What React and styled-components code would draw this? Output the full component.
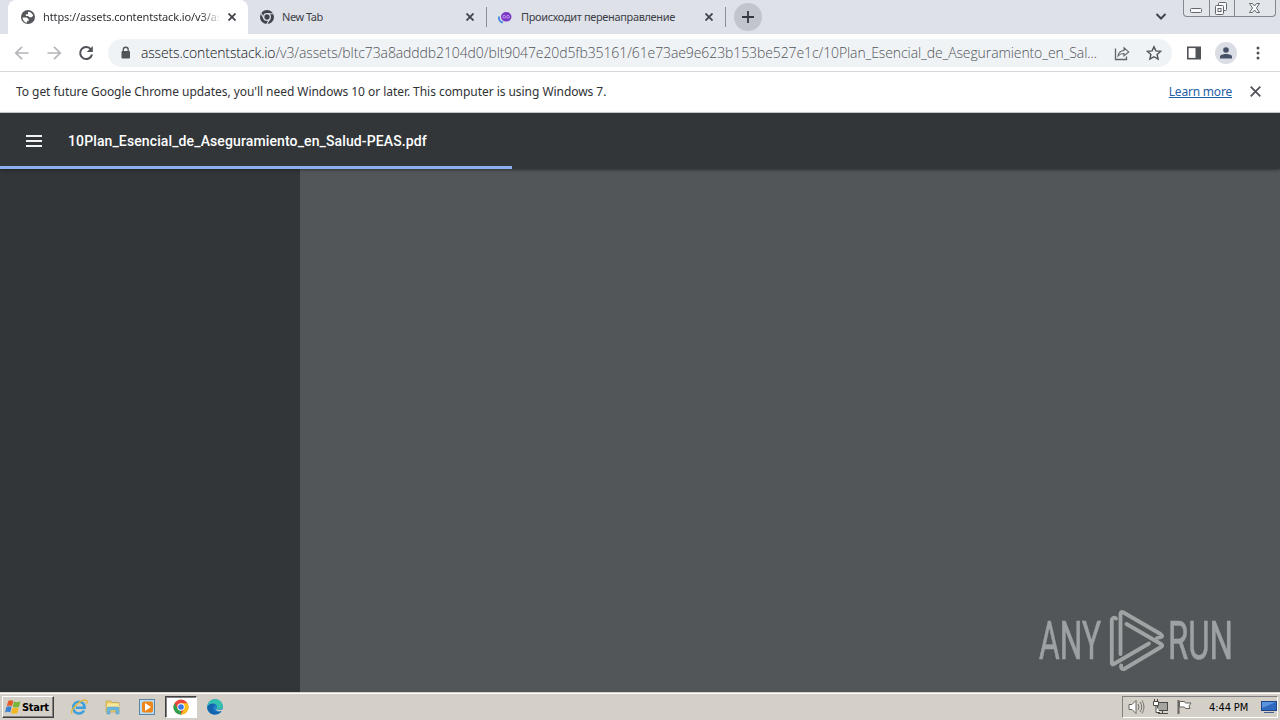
import React from "react";
import styled, { createGlobalStyle, css } from "styled-components";

const GlobalStyle = createGlobalStyle`
  * {
    box-sizing: border-box;
  }
  body {
    margin: 0;
    overflow: hidden;
    font-family: "Noto Sans", "Liberation Sans", sans-serif;
  }
  svg {
    display: block;
    flex: none;
  }
`;

const Desktop = styled.div`
  display: flex;
  flex-direction: column;
  width: 1280px;
  height: 720px;
`;

/* ---------- tab strip ---------- */

const TabStrip = styled.div`
  display: flex;
  height: 34px;
  padding-left: 8px;
  background: #dee1e8;
`;

const Tab = styled.div`
  display: flex;
  align-items: center;
  width: ${(p) => p.$width || 239}px;
  height: 34px;
  padding: 0 12px 0 ${(p) => (p.$active ? 12 : 11)}px;
  color: ${(p) => (p.$active ? "#303236" : "#3d4047")};
  ${(p) =>
    p.$active &&
    css`
      background: #fff;
      border-radius: 8px 8px 0 0;
    `}
`;

const TabTitle = styled.span`
  width: 176px;
  margin-left: ${(p) => p.$gap || 7}px;
  font-size: 11px;
  line-height: 16px;
  letter-spacing: ${(p) => p.$spacing || 0}px;
  white-space: nowrap;
  ${(p) =>
    p.$fade &&
    css`
      mask-image: linear-gradient(to right, #000 158px, transparent 178px);
    `}
`;

const TabClose = styled.span`
  margin-left: auto;
`;

const TabDivider = styled.span`
  width: 1px;
  height: 20px;
  margin: 7px -1px 0 0;
  background: #8b8e95;
`;

const NewTabButton = styled.div`
  display: grid;
  place-items: center;
  width: 28px;
  height: 28px;
  margin: 3px 0 0 9px;
  border-radius: 50%;
  background: #c2c5cb;
`;

const TabSearch = styled.span`
  margin: 12px 16px 0 auto;
`;

const WindowButtons = styled.div`
  display: flex;
  width: 93px;
  height: 17px;
  margin-right: 4px;
  border: 1px solid #85888e;
  border-top: 0;
  border-radius: 0 0 4px 4px;
  background: #e2e5ea;
`;

const WindowButton = styled.span`
  display: grid;
  place-items: center;
  width: ${(p) => p.$width}px;
  & + & {
    border-left: 1px solid #85888e;
  }
`;

/* ---------- toolbar ---------- */

const Toolbar = styled.div`
  display: flex;
  align-items: center;
  height: 38px;
  padding: 0 14px;
  border-bottom: 1px solid #d5d7da;
  background: #fff;
`;

const NavButton = styled.span`
  display: grid;
  place-items: center;
  width: 16px;
  height: 16px;
  margin-right: 16px;
`;

const Omnibox = styled.div`
  display: flex;
  align-items: center;
  width: 1064px;
  height: 28px;
  margin: 0 15px 0 -2px;
  padding: 0 10px 0 12px;
  border-radius: 14px;
  background: #f0f3f5;
`;

const Url = styled.span`
  width: 973px;
  margin-left: 9px;
  font-family: "Open Sans", "Noto Sans", sans-serif;
  font-size: 14px;
  font-weight: 300;
  line-height: 20px;
  letter-spacing: -0.1px;
  white-space: nowrap;
  color: #50545a;
`;

const Host = styled.span`
  color: #111317;
  letter-spacing: -0.16px;
`;

const Avatar = styled.div`
  display: grid;
  place-items: center;
  width: 22px;
  height: 22px;
  margin: 0 14px;
  border-radius: 50%;
  background: #dadde3;
`;

/* ---------- info bar ---------- */

const InfoBar = styled.div`
  display: flex;
  align-items: center;
  height: 41px;
  padding: 0 19px 2px 16px;
  border-bottom: 1px solid #cfd1d2;
  background: #fff;
  font-size: 12px;
  color: #303236;
`;

const InfoText = styled.span`
  letter-spacing: -0.05px;
`;

const InfoLink = styled.a`
  margin: 0 18px 0 auto;
  letter-spacing: -0.2px;
  color: #2460a8;
  text-decoration: underline;
`;

/* ---------- pdf viewer ---------- */

const PdfToolbar = styled.div`
  display: flex;
  align-items: center;
  position: relative;
  z-index: 1;
  height: 56px;
  padding-left: 26px;
  background: #323639;
  box-shadow: 0 1px 3px rgba(0, 0, 0, 0.4);
`;

const PdfTitle = styled.span`
  margin-left: 26px;
  font-family: Roboto, sans-serif;
  font-size: 14px;
  font-weight: 500;
  letter-spacing: 0.12px;
  color: #fff;
`;

const Progress = styled.div`
  position: absolute;
  left: 0;
  bottom: 0;
  width: 40%;
  height: 3px;
  background: #8ab0f0;
`;

const Viewer = styled.div`
  display: flex;
  flex: 1;
  min-height: 0;
`;

const Sidebar = styled.div`
  width: 300px;
  background: #323639;
`;

const Page = styled.div`
  display: flex;
  flex: 1;
  align-items: flex-end;
  justify-content: flex-end;
  padding: 0 44px 20px 0;
  background: #525659;
`;

/* ---------- taskbar ---------- */

const Taskbar = styled.div`
  display: flex;
  align-items: center;
  height: 28px;
  padding: 1px 2px 0;
  border-top: 1px solid #d4d0c8;
  box-shadow: inset 0 1px #fff;
  background: #d4d0c8;
  font-family: "DejaVu Sans Condensed", "DejaVu Sans", sans-serif;
  font-size: 11px;
`;

const StartButton = styled.div`
  display: flex;
  align-items: center;
  gap: 1px;
  width: 52px;
  height: 22px;
  margin-right: 9px;
  padding-left: 2px;
  border: 1px solid;
  border-color: #fff #404040 #404040 #fff;
  box-shadow: inset -1px -1px #808080;
  font-weight: bold;
  letter-spacing: -0.3px;
  color: #000;
`;

const TaskItem = styled.div`
  display: grid;
  place-items: center;
  width: 32px;
  height: 22px;
  margin-right: 2px;
  border: 1px solid transparent;
  ${(p) =>
    p.$pressed &&
    css`
      border-color: #404040 #fff #fff #404040;
      box-shadow: inset 1px 1px #808080;
      background: #fff;
    `}
`;

const Tray = styled.div`
  display: flex;
  align-items: center;
  gap: 7px;
  width: 156px;
  height: 22px;
  margin-left: auto;
  padding-left: 5px;
  border: 1px solid;
  border-color: #808080 #fff #fff #808080;
`;

const Clock = styled.span`
  width: 41px;
  margin: 0 5px 0 9px;
  letter-spacing: -0.1px;
  white-space: nowrap;
  color: #000;
`;

/* ---------- icons ---------- */

function CloseIcon({ size = 8, color = "#40434a", width = 1.8 }) {
  return (
    <svg width={size} height={size} viewBox="0 0 8 8">
      <path d="M.5 .5l7 7M7.500 .5l-7 7" stroke={color} strokeWidth={width} />
    </svg>
  );
}

function GlobeIcon() {
  return (
    <svg width="16" height="16" viewBox="0 0 16 16">
      <circle cx="8" cy="8" r="7" fill="#54575b" />
      <path d="M2.600 8.500h4.200l2 2v1.200H7.200v2C4.500 13.500 2.600 11 2.600 8.500zM8 2.800c2.500 0 4.600 1.700 5.200 4l-1.600 1.500H9.500L8 7H5.800V5.200H8z" fill="#fff" />
    </svg>
  );
}

function ChromeMonoIcon() {
  return (
    <svg width="16" height="16" viewBox="0 0 16 16">
      <circle cx="8" cy="8" r="7" fill="#40434a" />
      <circle cx="8" cy="8" r="3.300" fill="#40434a" stroke="#dee1e8" strokeWidth="1.300" />
      <path d="M8 4.700h6.500M5.100 9.700L2 4.200M10.900 9.700l-3.200 5.600" stroke="#dee1e8" strokeWidth="1.100" />
    </svg>
  );
}

function RedirectIcon() {
  return (
    <svg width="16" height="16" viewBox="0 0 16 16">
      <path d="M2 7.500c-.5 3 1 5.500 4 6" stroke="#518be8" strokeWidth="2" fill="none" />
      <ellipse cx="9.200" cy="7.800" rx="5.300" ry="4.800" fill="#7a38c8" />
      <circle cx="7.200" cy="7.800" r="1.400" fill="none" stroke="#c9a0f0" strokeWidth=".9" />
      <circle cx="11" cy="7.800" r="1.400" fill="none" stroke="#c9a0f0" strokeWidth=".9" />
    </svg>
  );
}

function ArrowIcon({ flip }) {
  return (
    <svg width="16" height="16" viewBox="0 0 16 16">
      <path
        d="M14.500 8H2M8 1.800L1.800 8 8 14.200"
        transform={flip ? "matrix(-1 0 0 1 16 0)" : undefined}
        fill="none"
        stroke="#b3b5b8"
        strokeWidth="1.700"
      />
    </svg>
  );
}

function ReloadIcon() {
  return (
    <svg width="16" height="16" viewBox="0 0 16 16">
      <path d="M13 4.500A6 6 0 1 0 14 9.500" fill="none" stroke="#505357" strokeWidth="2" />
      <path d="M14.800 1v6H8.800z" fill="#505357" />
    </svg>
  );
}

function LockIcon() {
  return (
    <svg width="12" height="14" viewBox="0 0 12 14">
      <rect x="1.500" y="5" width="8.500" height="7.500" rx="1" fill="#505357" />
      <path d="M3.300 5.500V3.700a2.450 2.450 0 0 1 4.900 0v1.800" fill="none" stroke="#505357" strokeWidth="1.300" />
    </svg>
  );
}

function ShareIcon() {
  return (
    <svg width="16" height="16" viewBox="0 0 16 16">
      <path d="M1.500 3.500v11h11v-3" fill="none" stroke="#606367" strokeWidth="1.300" />
      <path d="M4 11c.5-3.500 2.500-5.300 6-5.500V2.800l4.700 4.100-4.700 4V8.500C7.500 8.400 5.600 9.200 4 11z" fill="none" stroke="#606367" strokeWidth="1.100" />
    </svg>
  );
}

function StarIcon() {
  return (
    <svg width="16" height="16" viewBox="0 0 16 16">
      <path d="M8 1.700l1.900 4.200 4.700.5-3.500 3.100 1 4.600L8 11.700l-4.100 2.400 1-4.600-3.500-3.100 4.700-.5z" fill="none" stroke="#505357" strokeWidth="1.400" />
    </svg>
  );
}

function SidePanelIcon() {
  return (
    <svg width="14" height="14" viewBox="0 0 14 14">
      <rect x=".8" y="1.300" width="12.400" height="11.400" fill="none" stroke="#505357" strokeWidth="1.600" />
      <rect x="8.500" y="1" width="5.500" height="12" fill="#505357" />
    </svg>
  );
}

function WindowGlyph({ kind }) {
  const line = { fill: "#f7f8fa", stroke: "#63666d", strokeWidth: 1 };
  if (kind === "min") {
    return (
      <svg width="13" height="17" viewBox="0 0 13 17">
        <rect x=".5" y="8.500" width="11" height="4" rx="1" {...line} />
      </svg>
    );
  }
  if (kind === "restore") {
    return (
      <svg width="14" height="17" viewBox="0 0 14 17">
        <rect x="3.500" y="2.500" width="8" height="8" rx="1" {...line} />
        <rect x=".5" y="5.500" width="8" height="9" rx="1" {...line} />
        <rect x="3" y="8.500" width="3" height="3" {...line} />
      </svg>
    );
  }
  return (
    <svg width="13" height="17" viewBox="0 0 13 17">
      <path d="M.5 3.500h3l2 2.500 2-2.500h3L7.500 8l3 4.500h-3l-2-2.500-2 2.500h-3L3.500 8z" {...line} />
    </svg>
  );
}

function AnyRunLogo() {
  return (
    <svg width="198" height="64" viewBox="0 0 198 64">
      <g
        fill="#b4b7b9"
        stroke="#b4b7b9"
        strokeWidth=".7"
        opacity=".78"
        fontFamily="Roboto, sans-serif"
        fontSize="53"
      >
        <text x="1" y="51" textLength="62" lengthAdjust="spacingAndGlyphs">ANY</text>
        <text x="130" y="51" textLength="65" lengthAdjust="spacingAndGlyphs">RUN</text>
      </g>
      <g fill="none" stroke="#a9acad" strokeWidth="3.800" strokeLinecap="round" strokeLinejoin="round" opacity=".9">
        <path d="M78 10.500c-2-1.500-4.200-.5-4.200 2V55q0 2 2 1L111 35.500" />
        <path d="M82.500 46V6q0-3 3-1.500l37 21.500q3.500 2.500-.5 3.500l-3 .5" />
        <path d="M88.500 16L123 36q2.500 1.500 0 3L87 60.500c-2.500 1.500-4.500-.5-3.800-3" />
      </g>
    </svg>
  );
}

function WindowsFlag() {
  return (
    <svg width="16" height="16" viewBox="0 0 16 16">
      <path d="M3.200 2c2-1.200 3.500-1 5.200 0L7 7.300c-1.800-1-3.300-1-5.200 0z" fill="#e55b28" />
      <path d="M9 2.500c2 1 4 .9 6.500-.2L14 7.800c-1.900 1-4 1-6.200 0z" fill="#78b536" />
      <path d="M1.400 8c2-1 3.500-1 5.200 0l-1.400 5.400c-1.700-1-3.300-1-5.200 0z" fill="#3c83cf" />
      <path d="M7.500 8.500c2 1 4 1 6.200 0L12.300 14c-2 1-4.200 1-6.200 0z" fill="#f4b51e" />
    </svg>
  );
}

function ExplorerIcon() {
  return (
    <svg width="18" height="18" viewBox="0 0 18 18">
      <path d="M14 12.500c-1.200 2.200-2.900 3-5 3-3.500 0-5.800-2.600-5.800-6S5.700 3.700 9 3.700s5.600 2.300 5.600 6H5.800" fill="none" stroke="#3da0dc" strokeWidth="2.600" />
      <path d="M2 15.500C-.5 12 12-.2 16.500 2.500c1 .6.700 2-.2 3.300" fill="none" stroke="#e5b83a" strokeWidth="1.400" />
    </svg>
  );
}

function FolderIcon() {
  return (
    <svg width="18" height="18" viewBox="0 0 18 18">
      <path d="M2 3h5l1 1.500h7V14H2z" fill="#edcc62" stroke="#b9a055" strokeWidth=".7" />
      <path d="M3.500 5.500h11l1 7h-13z" fill="#f9e89b" />
      <path d="M3 16v-5.500q0-1.500 1.500-1.500h9q1.500 0 1.500 1.500V16h-3v-4H6v4z" fill="#6fb6dc" stroke="#4c94bb" strokeWidth=".5" />
    </svg>
  );
}

function MediaIcon() {
  return (
    <svg width="18" height="18" viewBox="0 0 18 18">
      <rect x="1.500" y="1.500" width="15" height="15" fill="#b9dcf2" stroke="#5786aa" />
      <rect x="4" y="3.500" width="11" height="11" rx="2" fill="#ef8718" />
      <path d="M7 5l6 4-6 4z" fill="#fff" />
    </svg>
  );
}

function ChromeIcon() {
  return (
    <svg width="16" height="16" viewBox="0 0 16 16">
      <circle cx="8" cy="8" r="7.500" fill="#e9483a" />
      <path d="M1.500 4.250L4.700 9.900 8 11.500v4A7.500 7.500 0 0 1 1.500 4.250z" fill="#2ba24c" />
      <path d="M14.500 4.250A7.500 7.500 0 0 1 8 15.500l3.300-5.600L8 4.250z" fill="#fbc116" />
      <circle cx="8" cy="8" r="3.700" fill="#fff" />
      <circle cx="8" cy="8" r="2.800" fill="#3b78e7" />
    </svg>
  );
}

function EdgeIcon() {
  return (
    <svg width="18" height="18" viewBox="0 0 18 18">
      <circle cx="9" cy="9" r="7.800" fill="#187bc6" />
      <path d="M1.200 8.500C2 3.800 5 1.200 9 1.200c5 0 8 3.500 7.800 7 0 2.700-3 4-5.500 3-1.300-.5-.4-1-.4-2.500C10.900 5 5 4 1.200 8.500z" fill="#35bfae" />
      <path d="M1.200 9c2.300-4 6-4 8-2-2.500.5-3 3.500-1.500 5.500 1.500 2 4.500 2 7.500 1.100-3 4-14 4.400-14-4.600z" fill="#1464ad" />
      <path d="M9.300 8c-1 2 .5 5 6.800 3.600l.8 1c-5 2-8.500-.5-7.600-4.600z" fill="#d4d0c8" />
    </svg>
  );
}

function SpeakerIcon() {
  return (
    <svg width="17" height="16" viewBox="0 0 17 16">
      <path d="M1 5.500h3L8 1.500v13l-4-4H1z" fill="#fff" stroke="#66645f" />
      <path d="M10 5q2 3 0 6M12 3q3.500 5 0 10M14 1.500q4 6.500 0 13" fill="none" stroke="#77756f" />
    </svg>
  );
}

function NetworkIcon() {
  return (
    <svg width="17" height="16" viewBox="0 0 17 16">
      <rect x="5.500" y="3.500" width="10" height="8" fill="#a5a49f" stroke="#4c4b48" />
      <path d="M6 14.500h10M10.500 12v2" stroke="#4c4b48" />
      <path d="M1.500 2.500h5v4h-5zM2.500 0v2.500M5.500 0v2.500M4 7v6.500h4" fill="#fff" stroke="#4c4b48" />
    </svg>
  );
}

function FlagIcon() {
  return (
    <svg width="17" height="16" viewBox="0 0 17 16">
      <path d="M2.500 1v14" stroke="#66645f" strokeWidth="2" />
      <path d="M3.500 2.500h5l1 1.500h5.500l-2 3 1 2.500H9.500l-1-1.500h-5z" fill="#fff" stroke="#66645f" />
    </svg>
  );
}

function App() {
  return (
    <>
      <GlobalStyle />
      <Desktop>
        <TabStrip>
          <Tab $active $width={240}>
            <GlobeIcon />
            <TabTitle $fade $spacing={-0.12}>https://assets.contentstack.io/v3/as</TabTitle>
            <TabClose><CloseIcon /></TabClose>
          </Tab>
          <Tab $width={238}>
            <ChromeMonoIcon />
            <TabTitle $spacing={-0.45}>New Tab</TabTitle>
            <TabClose><CloseIcon /></TabClose>
          </Tab>
          <TabDivider />
          <Tab>
            <RedirectIcon />
            <TabTitle $gap={8} $spacing={-0.35}>Происходит перенаправление</TabTitle>
            <TabClose><CloseIcon /></TabClose>
          </Tab>
          <TabDivider />
          <NewTabButton>
            <svg width="12" height="12" viewBox="0 0 12 12">
              <path d="M6 0v12M0 6h12" stroke="#34373d" strokeWidth="1.800" />
            </svg>
          </NewTabButton>
          <TabSearch>
            <svg width="12" height="9" viewBox="0 0 12 9">
              <path d="M1.500 2L6 6.500 10.500 2" fill="none" stroke="#40434a" strokeWidth="2" />
            </svg>
          </TabSearch>
          <WindowButtons>
            <WindowButton $width={25}><WindowGlyph kind="min" /></WindowButton>
            <WindowButton $width={25}><WindowGlyph kind="restore" /></WindowButton>
            <WindowButton $width={41}><WindowGlyph kind="close" /></WindowButton>
          </WindowButtons>
        </TabStrip>

        <Toolbar>
          <NavButton><ArrowIcon /></NavButton>
          <NavButton><ArrowIcon flip /></NavButton>
          <NavButton><ReloadIcon /></NavButton>
          <Omnibox>
            <LockIcon />
            <Url>
              <Host>assets.contentstack.io</Host>
              /v3/assets/bltc73a8adddb2104d0/blt9047e20d5fb35161/61e73ae9e623b153be527e1c/10Plan_Esencial_de_Aseguramiento_en_Sal...
            </Url>
            <NavButton><ShareIcon /></NavButton>
            <StarIcon />
          </Omnibox>
          <SidePanelIcon />
          <Avatar>
            <svg width="12" height="12" viewBox="0 0 12 12">
              <circle cx="6" cy="3" r="2.800" fill="#465066" />
              <path d="M0 11.500V9.700c0-3.600 12-3.600 12 0v1.800z" fill="#465066" />
            </svg>
          </Avatar>
          <svg width="14" height="14" viewBox="0 0 14 14" fill="#505357">
            <circle cx="7" cy="2" r="1.500" />
            <circle cx="7" cy="7" r="1.500" />
            <circle cx="7" cy="12" r="1.500" />
          </svg>
        </Toolbar>

        <InfoBar>
          <InfoText>
            To get future Google Chrome updates, you'll need Windows 10 or later. This computer is using Windows 7.
          </InfoText>
          <InfoLink>Learn more</InfoLink>
          <CloseIcon size={11} color="#505357" width={1.3} />
        </InfoBar>

        <PdfToolbar>
          <svg width="16" height="12" viewBox="0 0 16 12">
            <path d="M0 1h16M0 6h16M0 11h16" stroke="#f1f3f4" strokeWidth="2" />
          </svg>
          <PdfTitle>10Plan_Esencial_de_Aseguramiento_en_Salud-PEAS.pdf</PdfTitle>
          <Progress />
        </PdfToolbar>

        <Viewer>
          <Sidebar />
          <Page>
            <AnyRunLogo />
          </Page>
        </Viewer>

        <Taskbar>
          <StartButton>
            <WindowsFlag />
            Start
          </StartButton>
          <TaskItem><ExplorerIcon /></TaskItem>
          <TaskItem><FolderIcon /></TaskItem>
          <TaskItem><MediaIcon /></TaskItem>
          <TaskItem $pressed><ChromeIcon /></TaskItem>
          <TaskItem><EdgeIcon /></TaskItem>
          <Tray>
            <SpeakerIcon />
            <NetworkIcon />
            <FlagIcon />
            <Clock>4:44 PM</Clock>
            <svg width="16" height="14" viewBox="0 0 16 14">
              <rect x=".5" y="1.500" width="15" height="9" fill="#2f6ac0" stroke="#1d4688" />
              <path d="M1 2h14L1 8z" fill="#5a94df" />
              <path d="M3 12.500h10" stroke="#45618d" />
            </svg>
          </Tray>
        </Taskbar>
      </Desktop>
    </>
  );
}

export default App;
